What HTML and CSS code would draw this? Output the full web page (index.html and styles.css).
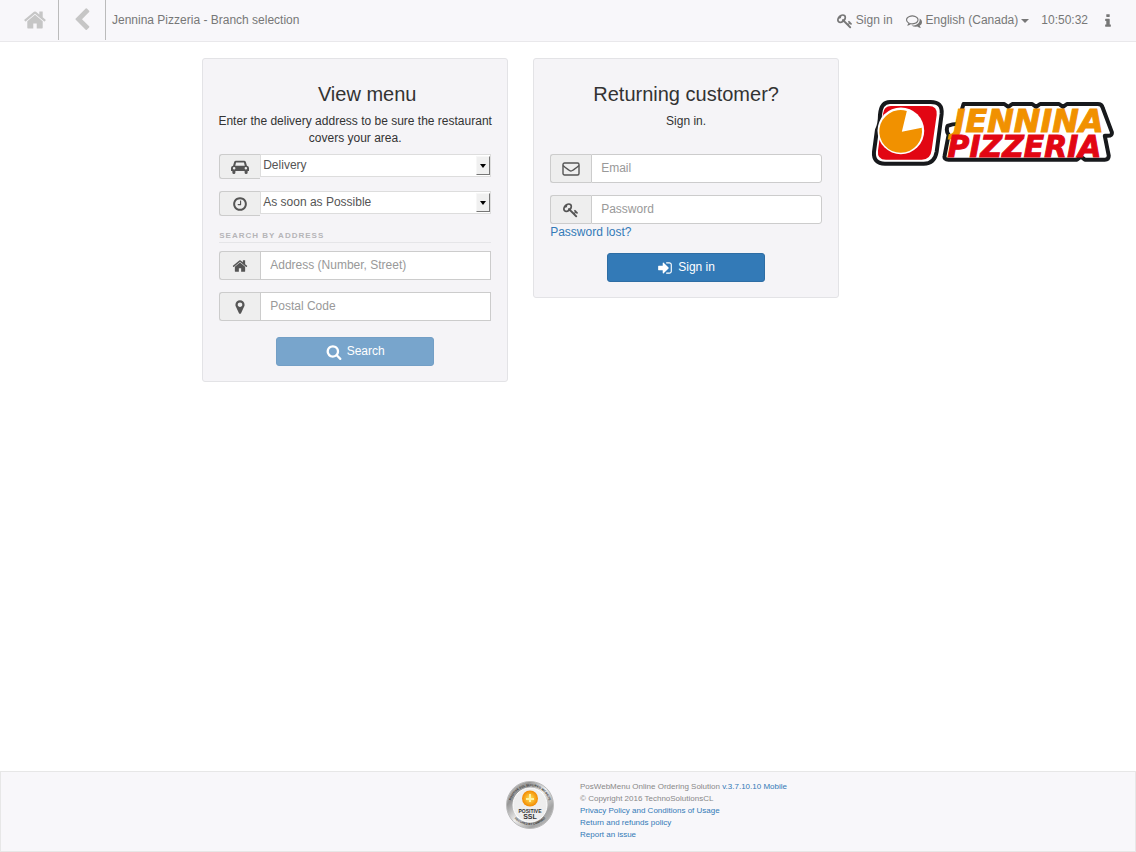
FILE: index.html
```html
<!DOCTYPE html>
<html lang="en-CA">
<head>
  <meta charset="UTF-8">
  <meta name="viewport" content="width=device-width, initial-scale=1.0">
  <title>Jennina Pizzeria - Branch selection</title>
  <link rel="stylesheet" href="styles.css">
</head>
<body>

  <!-- Shared icons -->
  <svg class="sprite" aria-hidden="true">
    <symbol id="icon-home" viewBox="0 0 1792 1792"><path d="M1472 992v480q0 26-19 45t-45 19h-384v-384h-256v384h-384q-26 0-45-19t-19-45v-480q0-1 .5-3t.5-3l575-474 575 474q1 2 1 6zm223-69l-62 74q-8 9-21 11h-3q-13 0-21-7l-692-577-692 577q-12 8-24 7-13-2-21-11l-62-74q-8-10-7-23.5t11-21.5l719-599q32-26 76-26t76 26l244 204v-195q0-14 9-23t23-9h192q14 0 23 9t9 23v408l219 182q10 8 11 21.5t-7 23.5z"/></symbol>
    <symbol id="icon-key" viewBox="0 0 1792 1792"><path d="M832 512q0-80-56-136t-136-56-136 56-56 136q0 42 19 83-41-19-83-19-80 0-136 56t-56 136 56 136 136 56 136-56 56-136q0-42-19-83 41 19 83 19 80 0 136-56t56-136zm851 704q0 17-49 66t-66 49q-9 0-28.5-16t-36.5-33-38.5-40-24.5-26l-96 96 220 220q28 28 28 68 0 42-39 81t-81 39q-40 0-68-28l-671-671q-176 131-365 131-163 0-265.5-102.5t-102.5-265.5q0-160 95-313t248-248 313-95q163 0 265.5 102.5t102.5 265.5q0 189-131 365l355 355 96-96q-3-3-26-24.5t-40-38.5-33-36.5-16-28.5q0-17 49-66t66-49q13 0 23 10 6 6 46 44.5t82 79.5 86.5 86 73 78 28.5 41z"/></symbol>
  </svg>

  <header class="navbar">
    <a class="nav-btn nav-home" href="#" aria-label="Home"><svg><use href="#icon-home"/></svg></a>
    <a class="nav-btn nav-back" href="#" aria-label="Back"><svg viewBox="0 0 1792 1792"><path d="M1427 301l-531 531 531 531q19 19 19 45t-19 45l-166 166q-19 19-45 19t-45-19l-742-742q-19-19-19-45t19-45l742-742q19-19 45-19t45 19l166 166q19 19 19 45t-19 45z"/></svg></a>
    <span class="nav-title">Jennina Pizzeria - Branch selection</span>
    <nav class="nav-right">
      <a href="#signin"><svg><use href="#icon-key"/></svg>Sign in</a>
      <a href="#language"><svg class="chat" viewBox="0 0 1792 1792"><path d="M704 384q-153 0-286 52t-211.5 141-78.5 191q0 82 53 158t149 132l97 56-35 84q34-20 62-39l44-31 53 10q78 14 153 14 153 0 286-52t211.5-141 78.5-191-78.5-191-211.5-141-286-52zm0-128q191 0 353.5 68.5t256.5 186.5 94 257-94 257-256.5 186.5-353.5 68.5q-86 0-176-16-124 88-278 128-36 9-86 16h-3q-11 0-20.5-8t-11.5-21q-1-3-1-6.5t.5-6.5 2-6l2.5-5 3.5-5.5 4-5 4.5-5 4-4.5q5-6 23-25t26-29.5 22.5-29 25-38.5 20.5-44q-124-72-195-177t-71-224q0-139 94-257t256.5-186.5 353.5-68.5zm822 1169q10 24 20.5 44t25 38.5 22.5 29 26 29.5 23 25q1 1 4 4.5t4.5 5 4 5 3.5 5.5l2.5 5 2 6 .5 6.5-1 6.5q-3 14-13 22t-22 7q-50-7-86-16-154-40-278-128-90 16-176 16-271 0-472-132 58 4 88 4 161 0 309-45t264-129q125-92 192-212t67-254q0-77-23-152 129 71 204 178t75 230q0 120-71 224.5t-195 176.5z"/></svg>English (Canada)<span class="caret"></span></a>
      <span>10:50:32</span>
      <a href="#info" aria-label="Information"><svg viewBox="0 0 1792 1792"><path d="M1216 1344v128q0 26-19 45t-45 19h-512q-26 0-45-19t-19-45v-128q0-26 19-45t45-19h64v-384h-64q-26 0-45-19t-19-45v-128q0-26 19-45t45-19h384q26 0 45 19t19 45v576h64q26 0 45 19t19 45zm-128-1152v192q0 26-19 45t-45 19h-256q-26 0-45-19t-19-45v-192q0-26 19-45t45-19h256q26 0 45 19t19 45z"/></svg></a>
    </nav>
  </header>

  <main class="content">
    <form class="well menu-form">
      <h2>View menu</h2>
      <p>Enter the delivery address to be sure the restaurant covers your area.</p>

      <div class="input-group select-group">
        <label for="service" aria-label="Service"><svg class="car" viewBox="0 0 20 16"><path fill-rule="evenodd" d="M5.500 1h9q1.500 0 2 1.500L17.700 6.500Q20 7 20 9v3.500h-1.500V14q0 1.700-1.700 1.700T15.100 14v-1.500H4.900V14q0 1.700-1.700 1.700T1.500 14v-1.500H0V9q0-2 2.300-2.500L3.500 2.500Q4 1 5.500 1zM5.600 3 4.700 6.500h10.600L14.400 3zM3.500 8a1.400 1.400 0 1 0 0 2.800 1.400 1.400 0 0 0 0-2.800zm13 0a1.400 1.400 0 1 0 0 2.800 1.400 1.400 0 0 0 0-2.800z"/></svg></label>
        <div class="select-box">
          <select id="service">
            <option>Delivery</option>
            <option>Pickup</option>
          </select>
          <span class="drop"></span>
        </div>
      </div>

      <div class="input-group select-group">
        <label for="when" aria-label="Time"><svg viewBox="0 0 1792 1792"><path d="M1024 544v448q0 14-9 23t-23 9h-320q-14 0-23-9t-9-23v-64q0-14 9-23t23-9h224v-352q0-14 9-23t23-9h64q14 0 23 9t9 23zm416 352q0-148-73-273t-198-198-273-73-273 73-198 198-73 273 73 273 198 198 273 73 273-73 198-198 73-273zm224 0q0 209-103 385.5t-279.500 279.500-385.500 103-385.500-103-279.500-279.500-103-385.500 103-385.500 279.500-279.500 385.500-103 385.500 103 279.500 279.500 103 385.500z"/></svg></label>
        <div class="select-box">
          <select id="when">
            <option>As soon as Possible</option>
            <option>Later</option>
          </select>
          <span class="drop"></span>
        </div>
      </div>

      <h3>SEARCH BY ADDRESS</h3>
      <div class="input-group square">
        <label for="address" aria-label="Address"><svg><use href="#icon-home"/></svg></label>
        <input type="text" id="address" placeholder="Address (Number, Street)">
      </div>
      <div class="input-group square">
        <label for="postal" aria-label="Postal Code"><svg viewBox="0 0 1792 1792"><path d="M1152 640q0-106-75-181t-181-75-181 75-75 181 75 181 181 75 181-75 75-181zm256 0q0 109-33 179l-364 774q-16 33-47.5 52t-67.5 19-67.5-19-46.5-52l-365-774q-33-70-33-179 0-212 150-362t362-150 362 150 150 362z"/></svg></label>
        <input type="text" id="postal" placeholder="Postal Code">
      </div>
      <button class="btn" type="submit" disabled><svg viewBox="0 0 1792 1792"><path d="M1216 832q0-185-131.5-316.5t-316.5-131.5-316.5 131.5-131.5 316.5 131.5 316.5 316.5 131.5 316.5-131.5 131.5-316.5zm512 832q0 52-38 90t-90 38q-54 0-90-38l-343-342q-179 124-399 124-143 0-273.5-55.5t-225-150-150-225-55.5-273.5 55.5-273.5 150-225 225-150 273.5-55.5 273.5 55.5 225 150 150 225 55.5 273.5q0 220-124 399l343 343q37 37 37 90z"/></svg>Search</button>
    </form>

    <form class="well login-form" id="signin">
      <h2>Returning customer?</h2>
      <p>Sign in.</p>
      <div class="input-group">
        <label for="email" aria-label="Email"><svg class="mail" viewBox="0 0 18 14"><rect x="1" y="1" width="16" height="12" rx="1.500"/><path d="M1 3.500c2.500 2.500 4.500 3.500 6.200 4.800 1.200.9 2.400.9 3.600 0C12.500 7 14.500 6 17 3.500"/></svg></label>
        <input type="email" id="email" placeholder="Email">
      </div>
      <div class="input-group">
        <label for="password" aria-label="Password"><svg><use href="#icon-key"/></svg></label>
        <input type="password" id="password" placeholder="Password">
      </div>
      <a class="lost" href="#lost">Password lost?</a>
      <button class="btn" type="submit"><svg viewBox="0 0 1792 1792"><path d="M1312 896q0 26-19 45l-544 544q-19 19-45 19t-45-19-19-45v-288h-448q-26 0-45-19t-19-45v-384q0-26 19-45t45-19h448v-288q0-26 19-45t45-19 45 19l544 544q19 19 19 45zm352-352v704q0 119-84.5 203.5t-203.5 84.5h-320q-13 0-22.5-9.5t-9.5-22.5q0-4-1-20t-.5-26.5 3-23.5 10-19.5 20.5-6.5h320q66 0 113-47t47-113v-704q0-66-47-113t-113-47h-312l-11.5-1-11.5-3-8-5.5-7-9-2-13.5q0-4-1-20t-.5-26.5 3-23.5 10-19.5 20.5-6.5h320q119 0 203.5 84.5t84.5 203.5z"/></svg>Sign in</button>
    </form>

    <svg class="logo" viewBox="0 0 246 68" role="img" aria-label="Jennina Pizzeria">
      <path class="edge" d="M19 3h41q12 0 11 12l-5 38q-2 12-13 12H14Q2 65 3 53L6 31q3-6 3-15 1-13 10-13z"/>
      <path d="M20 7h38q9 0 8 9l-5 35q-1 10-10 10H15q-9 0-8-9l5-37q1-8 8-8z" fill="#e20613"/>
      <circle cx="30" cy="32" r="23.500" fill="#fff"/>
      <path d="M31 33 36 12A21.500 21.500 0 1 0 51 29z" fill="#f19100"/>
      <path class="edge" d="M93 5h41l4 3 4-3h20l4 3 4-3h19l4 3 4-3h31q4 0 5 4l9 24q1 4-4 4h-3l4 20q0 4-4 4h-20l-4-3-4 3H78q-5 0-4-4l4-21q-3-4-1-9 5-2 10-2z"/>
      <text class="orange" x="83" y="33">JENNINA</text>
      <text class="red" x="77" y="58">PIZZERIA</text>
    </svg>
  </main>

  <footer class="footer">
    <svg class="seal" viewBox="0 0 48 48" role="img" aria-label="Positive SSL">
      <defs>
        <linearGradient id="silver" x1="0" y1="0" x2="1" y2="1">
          <stop offset="0" stop-color="#d8d8d8"/><stop offset=".25" stop-color="#959595"/><stop offset=".5" stop-color="#eee"/><stop offset=".75" stop-color="#a2a2a2"/><stop offset="1" stop-color="#ccc"/>
        </linearGradient>
        <radialGradient id="sun"><stop offset="0" stop-color="#ffe45a"/><stop offset="1" stop-color="#f38a00"/></radialGradient>
        <path id="arc-top" d="M5 29A19.500 19.500 0 1 1 43 29"/>
        <path id="arc-bottom" d="M5 32A21 21 0 0 0 43 32"/>
      </defs>
      <circle cx="24" cy="24" r="23.500" fill="url(#silver)" stroke="#bbb"/>
      <circle cx="24" cy="24" r="17" fill="#eee" stroke="#fff"/>
      <circle cx="24" cy="17.500" r="8" fill="url(#sun)"/>
      <path d="M24 13v8M20 18h8" stroke="#fff2a0" stroke-width="2"/>
      <text class="seal-ring"><textPath href="#arc-top" startOffset="50%">POSITIVE SSL SECURED WEBSITE</textPath></text>
      <text class="seal-ring"><textPath href="#arc-bottom" startOffset="50%">SECURED BY COMODO</textPath></text>
      <text class="seal-name" x="24" y="32">POSITIVE</text>
      <text class="seal-ssl" x="24" y="38">SSL</text>
    </svg>
    <div class="footer-text">
      <div>PosWebMenu Online Ordering Solution <a href="#version">v.3.7.10.10 Mobile</a></div>
      <div>© Copyright 2016 TechnoSolutionsCL</div>
      <a href="#privacy">Privacy Policy and Conditions of Usage</a>
      <a href="#refunds">Return and refunds policy</a>
      <a href="#issue">Report an issue</a>
    </div>
  </footer>

</body>
</html>
```
FILE: styles.css
```css
* {
  box-sizing: border-box;
}

body {
  display: flex;
  flex-direction: column;
  min-height: 100vh;
  margin: 0;
  font-family: "Liberation Sans", Arial, sans-serif;
  font-size: 12px;
  line-height: 17px;
  color: #333;
  background-color: #fff;
}

a {
  color: #337ab7;
  text-decoration: none;
}

a:hover {
  text-decoration: underline;
}

svg {
  width: 16px;
  height: 16px;
  fill: currentColor;
}

.sprite {
  display: none;
}

/* Top bar */
.navbar {
  display: flex;
  align-items: stretch;
  min-height: 42px;
  padding-left: 12px;
  background-color: #f8f7fa;
  border-bottom: 1px solid #e9e8eb;
  color: #777;
}

.nav-btn {
  display: flex;
  align-items: center;
  justify-content: center;
  width: 47px;
  height: 40px;
  border-right: 1px solid #bbb;
  color: #c6c6c6;
}

.nav-btn svg {
  width: 24px;
  height: 24px;
}

.nav-title {
  padding: 12px 6px;
}

.nav-right {
  display: flex;
  align-items: center;
  gap: 12px;
  margin-left: auto;
  padding-right: 20px;
}

.nav-right a {
  display: flex;
  align-items: center;
  gap: 3px;
  color: #777;
}

.nav-right .chat {
  width: 18px;
}

.caret {
  border-top: 4px solid #777;
  border-left: 4px solid transparent;
  border-right: 4px solid transparent;
}

/* Forms */
.content {
  display: grid;
  grid-template-columns: 306fr 306fr 272fr;
  gap: 25px;
  align-items: start;
  flex: 1;
  padding: 16px 0 16px 17.8%;
}

.well {
  padding: 23px 16px 15px;
  background-color: #f5f4f7;
  border: 1px solid #e3e3e6;
  border-radius: 3px;
}

h2 {
  margin: 0 0 7px;
  font-size: 20px;
  font-weight: normal;
  line-height: 24px;
  text-align: center;
}

.menu-form h2 {
  padding-left: 24px;
}

.well p {
  margin: 0 -8px 7px;
  text-align: center;
}

.login-form p {
  margin-bottom: 24px;
}

.input-group {
  display: flex;
  height: 29px;
  margin-bottom: 12px;
}

.input-group label {
  display: flex;
  align-items: center;
  justify-content: center;
  width: 41px;
  background-color: #eee;
  border: 1px solid #ccc;
  border-right: 0;
  border-radius: 3px 0 0 3px;
  color: #555;
}

.input-group input {
  flex: 1;
  min-width: 0;
  padding: 0 9px;
  font: inherit;
  color: #555;
  background-color: #fff;
  border: 1px solid #ccc;
  border-radius: 0 3px 3px 0;
}

.input-group.square input {
  border-radius: 0;
}

.input-group ::placeholder {
  color: #999;
  opacity: 1;
}

.input-group .car,
.input-group .mail {
  width: 18px;
}

.input-group .mail {
  fill: none;
  stroke: currentColor;
  stroke-width: 1.4;
}

.input-group.select-group {
  height: 25px;
}

.select-box {
  position: relative;
  flex: 1;
  height: 23px;
}

.select-box select {
  appearance: none;
  width: 100%;
  height: 100%;
  padding: 0 16px 0 2px;
  font: inherit;
  color: #555;
  background-color: #fff;
  border: 1px solid #ddd;
  border-radius: 0;
}

/* Raised drop-down button over the right end of the select */
.drop {
  position: absolute;
  top: 2px;
  right: 1px;
  display: flex;
  align-items: center;
  justify-content: center;
  width: 14px;
  height: 19px;
  background-color: #f0f0f0;
  border: 1px solid #f7f7f7;
  border-right-color: #777;
  border-bottom-color: #777;
  pointer-events: none;
}

.drop::after {
  content: "";
  border-top: 4px solid #000;
  border-left: 3px solid transparent;
  border-right: 3px solid transparent;
}

h3 {
  margin: 0 0 8px;
  padding-top: 2px;
  font-size: 8px;
  line-height: 12px;
  letter-spacing: 1px;
  color: #b5b5b8;
  border-bottom: 1px solid #e5e5e8;
}

.btn {
  display: flex;
  align-items: center;
  justify-content: center;
  gap: 5px;
  width: 158px;
  height: 29px;
  margin: 16px auto 0;
  font: inherit;
  color: #fff;
  background-color: #337ab7;
  border: 1px solid #2e6da4;
  border-radius: 3px;
}

.btn:disabled {
  background-color: #78a5cc;
  border-color: #739fc6;
}

.lost {
  display: block;
  width: max-content;
  margin-top: -12px;
}

.login-form .btn {
  margin-top: 12px;
}

/* Logo */
.logo {
  width: 90%;
  height: auto;
  margin: 41px 0 0 7px;
}

.logo .edge {
  fill: #fff;
  stroke: #17191c;
  stroke-width: 4;
  stroke-linejoin: round;
}

.logo text {
  font-family: "DejaVu Sans", sans-serif;
  font-style: italic;
  font-weight: bold;
}

.logo .orange {
  font-size: 32px;
  fill: #f19100;
  stroke: #f19100;
}

.logo .red {
  font-size: 30px;
  fill: #e20613;
  stroke: #e20613;
}

/* Footer */
.footer {
  display: flex;
  justify-content: center;
  gap: 26px;
  padding: 9px 0 10px 157px;
  background-color: #f8f7fa;
  border: 1px solid #e7e7e7;
  color: #888;
}

.seal {
  width: 48px;
  height: 48px;
}

.seal text {
  font-family: "Liberation Sans", Arial, sans-serif;
  font-weight: bold;
  fill: #333;
  text-anchor: middle;
}

.seal .seal-ring {
  font-size: 3px;
}

.seal .seal-name {
  font-size: 5px;
}

.seal .seal-ssl {
  font-size: 7px;
}

.footer-text {
  display: flex;
  flex-direction: column;
  align-items: flex-start;
  font-size: 8px;
  line-height: 12px;
}
```
